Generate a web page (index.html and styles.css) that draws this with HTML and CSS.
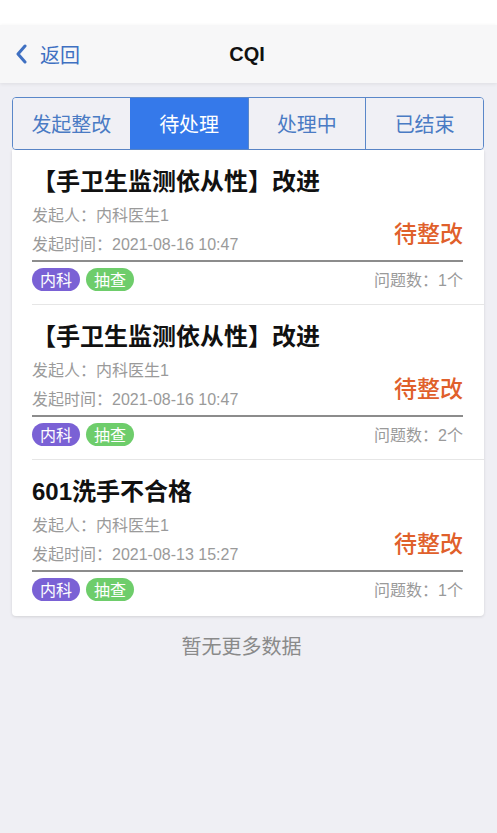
FILE: index.html
```html
<!DOCTYPE html>
<html lang="zh">
<head>
<meta charset="utf-8">
<title>CQI</title>
<link rel="stylesheet" href="styles.css">
</head>
<body>
<div class="statusbar"></div>
<header class="navbar">
  <div class="back">
    <svg class="chev" width="12" height="20" viewBox="0 0 12 20"><path d="M10 2 L3 10 L10 18" fill="none" stroke="#3f70c2" stroke-width="3" stroke-linecap="round" stroke-linejoin="round"/></svg>
    <span>返回</span>
  </div>
  <div class="title">CQI</div>
  <div class="spacer"></div>
</header>
<main class="content">
  <nav class="tabs">
    <div class="tab">发起整改</div>
    <div class="tab active">待处理</div>
    <div class="tab">处理中</div>
    <div class="tab">已结束</div>
  </nav>
  <section class="card">
    <div class="item">
      <div class="item-title">【手卫生监测依从性】改进</div>
      <div class="meta">
        <div class="meta-text">
          <div class="row">发起人：内科医生1</div>
          <div class="row">发起时间：2021-08-16 10:47</div>
        </div>
        <div class="status">待整改</div>
      </div>
      <div class="foot">
        <div class="tags"><span class="tag purple">内科</span><span class="tag green">抽查</span></div>
        <div class="count">问题数：1个</div>
      </div>
    </div>
    <div class="item">
      <div class="item-title">【手卫生监测依从性】改进</div>
      <div class="meta">
        <div class="meta-text">
          <div class="row">发起人：内科医生1</div>
          <div class="row">发起时间：2021-08-16 10:47</div>
        </div>
        <div class="status">待整改</div>
      </div>
      <div class="foot">
        <div class="tags"><span class="tag purple">内科</span><span class="tag green">抽查</span></div>
        <div class="count">问题数：2个</div>
      </div>
    </div>
    <div class="item">
      <div class="item-title">601洗手不合格</div>
      <div class="meta">
        <div class="meta-text">
          <div class="row">发起人：内科医生1</div>
          <div class="row">发起时间：2021-08-13 15:27</div>
        </div>
        <div class="status">待整改</div>
      </div>
      <div class="foot">
        <div class="tags"><span class="tag purple">内科</span><span class="tag green">抽查</span></div>
        <div class="count">问题数：1个</div>
      </div>
    </div>
  </section>
  <div class="nomore">暂无更多数据</div>
</main>
</body>
</html>
```
FILE: styles.css
```css
* { box-sizing: border-box; }
html, body { margin: 0; padding: 0; }
body {
  width: 497px;
  min-height: 833px;
  background: #efeff4;
  font-family: "Liberation Sans", "Noto Sans CJK SC", sans-serif;
}
.statusbar { height: 25px; background: #ffffff; }
.navbar {
  height: 58px;
  background: #f7f7f8;
  display: flex;
  align-items: center;
  padding: 0 15px;
  box-shadow: 0 1px 4px rgba(0,0,0,0.08);
  position: relative;
}
.back {
  display: flex;
  align-items: center;
  gap: 13px;
  color: #3f70c2;
  font-size: 20px;
  width: 100px;
}
.chev { display: block; }
.title {
  flex: 1;
  text-align: center;
  font-size: 20px;
  font-weight: bold;
  color: #111;
  margin-left: -3px;
}
.spacer { width: 100px; }
.content { padding: 14px 13px 0 12px; }
.tabs {
  display: flex;
  height: 53px;
  border: 1px solid #5a87c9;
  border-radius: 4px;
  overflow: hidden;
}
.tab {
  flex: 1;
  display: flex;
  align-items: center;
  justify-content: center;
  font-size: 20px;
  color: #4a7bc4;
  background: #f0f0f5;
  border-left: 1px solid #5a87c9;
}
.tab:first-child { border-left: none; }
.tab.active { background: #3579ea; color: #fff; border-left-color: #3579ea; }
.card {
  background: #fff;
  border-radius: 0 0 4px 4px;
  box-shadow: 0 1px 3px rgba(0,0,0,0.12);
}
.item {
  margin-left: 20px;
  padding: 17px 21px 0 0;
  height: 155px;
  border-bottom: 1px solid #e6e6e6;
}
.item:last-child { border-bottom: none; height: 156px; }
.item-title {
  font-size: 24px;
  line-height: 30px;
  font-weight: bold;
  color: #111;
}
.meta {
  display: flex;
  justify-content: space-between;
  align-items: center;
  margin-top: 4px;
  border-bottom: 2px solid #8c8c8c;
  padding-bottom: 1px;
}
.row {
  font-size: 16px;
  line-height: 29px;
  color: #9a9a9a;
}
.status {
  font-size: 23px;
  font-weight: 500;
  color: #e0602b;
  padding-top: 4px;
}
.foot {
  display: flex;
  justify-content: space-between;
  align-items: center;
  margin-top: 5px;
}
.tags { display: flex; gap: 6px; }
.tag {
  display: inline-flex;
  align-items: center;
  justify-content: center;
  height: 23px;
  padding: 0 8px;
  border-radius: 12px;
  font-size: 16px;
  color: #fff;
}
.tag.purple { background: #7a61d5; }
.tag.green { background: #6ecd6b; }
.count { font-size: 16px; color: #9a9a9a; }
.nomore {
  text-align: center;
  font-size: 20px;
  color: #8a8a8a;
  margin-top: 15px;
  padding-right: 13px;
}
```
